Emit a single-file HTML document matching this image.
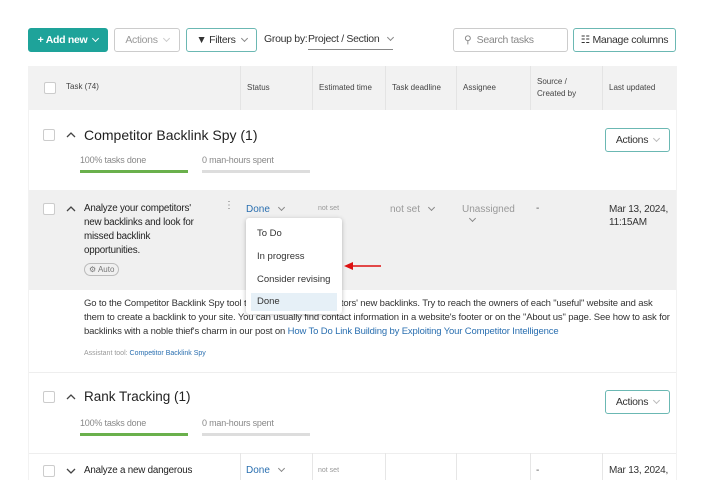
<!DOCTYPE html>
<html><head><style>
*{box-sizing:border-box;margin:0;padding:0}
body{width:704px;height:480px;background:#fff;font-family:"Liberation Sans",sans-serif;position:relative;overflow:hidden;color:#333}
.a{position:absolute;white-space:nowrap}
.btn{position:absolute;height:24px;border:1px solid #6bb8b3;border-radius:3px;font-size:10.5px;display:flex;align-items:center;justify-content:center;color:#333;letter-spacing:-.3px;white-space:nowrap}
.cb{position:absolute;width:12px;height:12px;border:1px solid #ccc;border-radius:2px;background:#fff}
.th{position:absolute;top:66px;height:44px;font-size:8px;color:#444;display:flex;align-items:center;padding-left:6px;border-left:1px solid #e4e4e4;line-height:12px}
.chev{display:inline-block;width:5px;height:5px;border-right:1px solid #888;border-bottom:1px solid #888;transform:rotate(45deg);margin-left:6px;position:relative;top:-2px}
.s{font-size:9px;color:#888;letter-spacing:-.2px}
.bar{position:absolute;height:3px}
.vl{position:absolute;width:1px;background:#e6e6e6}
svg.u{position:absolute}
</style></head><body>
<div class="btn" style="left:28px;top:28px;width:80px;background:#1ea39a;border-color:#1ea39a;color:#fff;font-weight:bold">+ Add new <span class="chev" style="border-color:#fff"></span></div>
<div class="btn" style="left:114px;top:28px;width:66px;border-color:#ccc;color:#999">Actions <span class="chev" style="border-color:#ccc"></span></div>
<div class="btn" style="left:186px;top:28px;width:71px">▼ Filters <span class="chev"></span></div>
<div class="a" style="left:264px;top:33px;font-size:10.5px;letter-spacing:-.3px">Group by:</div>
<div class="a" style="left:308px;top:33px;font-size:10.5px;letter-spacing:-.3px;border-bottom:1px solid #888;padding-bottom:4px;width:85px">Project / Section <span class="chev"></span></div>
<div class="btn" style="left:453px;top:28px;width:115px;border-color:#ccc;color:#888;justify-content:flex-start;padding-left:10px">⚲&nbsp; Search tasks</div>
<div class="btn" style="left:573px;top:28px;width:103px">☷ Manage columns</div>

<div class="a" style="left:28px;top:66px;width:648px;height:44px;background:#f2f2f2"></div>
<div class="cb" style="left:44px;top:82px"></div>
<div class="a" style="left:66px;top:82px;font-size:8px;color:#444">Task (74)</div>
<div class="th" style="left:240px;width:72px">Status</div>
<div class="th" style="left:312px;width:73px">Estimated time</div>
<div class="th" style="left:385px;width:71px">Task deadline</div>
<div class="th" style="left:456px;width:74px">Assignee</div>
<div class="th" style="left:530px;width:72px">Source /<br>Created by</div>
<div class="th" style="left:602px;width:74px">Last updated</div>

<div class="cb" style="left:43px;top:129px"></div>
<svg class="u" style="left:66px;top:131px" width="10" height="8"><path d="M1 6 L5 2 L9 6" fill="none" stroke="#444" stroke-width="1.3"/></svg>
<div class="a" style="left:84px;top:127px;font-size:14px;color:#222">Competitor Backlink Spy (1)</div>
<div class="a s" style="left:80px;top:155px">100% tasks done</div>
<div class="bar" style="left:80px;top:170px;width:108px;background:#6ab04c"></div>
<div class="a s" style="left:202px;top:155px">0 man-hours spent</div>
<div class="bar" style="left:202px;top:170px;width:108px;background:#ddd"></div>
<div class="btn" style="left:605px;top:128px;width:65px">Actions <span class="chev" style="border-color:#bbb"></span></div>

<div class="a" style="left:28px;top:190px;width:648px;height:100px;background:#f0f0f0"></div>
<div class="cb" style="left:43px;top:203px"></div>
<svg class="u" style="left:66px;top:205px" width="10" height="8"><path d="M1 6 L5 2 L9 6" fill="none" stroke="#444" stroke-width="1.3"/></svg>
<div class="a" style="left:84px;top:202px;font-size:9.8px;line-height:14px;color:#222;width:122px;white-space:normal;letter-spacing:-.2px">Analyze your competitors' new backlinks and look for missed backlink opportunities.</div>
<div class="a" style="left:84px;top:263px;font-size:8px;color:#777;border:1px solid #bbb;border-radius:8px;padding:1px 4px">⚙ Auto</div>
<div class="a" style="left:224px;top:200px;font-size:10px;color:#777">⋮</div>
<div class="a" style="left:246px;top:204px;font-size:10px;color:#2a6fb0">Done <span class="chev"></span></div>
<div class="a" style="left:318px;top:205px;font-size:7px;color:#999">not set</div>
<div class="a" style="left:390px;top:204px;font-size:10px;color:#999">not set <span class="chev"></span></div>
<div class="a" style="left:462px;top:204px;font-size:10px;color:#999">Unassigned<br><span class="chev" style="margin-left:8px"></span></div>
<div class="a" style="left:536px;top:203px;font-size:10px;color:#555">-</div>
<div class="a" style="left:609px;top:203px;font-size:10px;line-height:13px;color:#333;letter-spacing:-.2px">Mar 13, 2024,<br>11:15AM</div>

<div class="a" style="left:84px;top:297px;font-size:9.5px;line-height:14px;color:#333;width:590px;white-space:normal;letter-spacing:-.15px">Go to the Competitor Backlink Spy tool to analyze your competitors' new backlinks. Try to reach the owners of each "useful" website and ask them to create a backlink to your site. You can usually find contact information in a website's footer or on the "About us" page. See how to ask for backlinks with a noble thief's charm in our post on <span style="color:#2a6fb0">How To Do Link Building by Exploiting Your Competitor Intelligence</span></div>
<div class="a" style="left:84px;top:350px;font-size:7px;color:#999">Assistant tool: <span style="color:#2a6fb0">Competitor Backlink Spy</span></div>

<div class="a" style="left:246px;top:218px;width:96px;height:96px;background:#fff;border-radius:3px;box-shadow:0 1px 5px rgba(0,0,0,.25)"></div>
<div class="a" style="left:257px;top:228px;font-size:9.5px">To Do</div>
<div class="a" style="left:257px;top:251px;font-size:9.5px">In progress</div>
<div class="a" style="left:257px;top:274px;font-size:9.5px">Consider revising</div>
<div class="a" style="left:251px;top:293px;width:86px;height:18px;background:#e6f0f7"></div>
<div class="a" style="left:257px;top:296px;font-size:9.5px">Done</div>
<svg class="a" style="left:344px;top:261px" width="38" height="10"><line x1="6" y1="5" x2="37" y2="5" stroke="#d11" stroke-width="1.5"/><polygon points="0,5 9,1 9,9" fill="#d11"/></svg>

<div class="a" style="left:28px;top:372px;width:648px;height:1px;background:#eee"></div>
<div class="cb" style="left:43px;top:391px"></div>
<svg class="u" style="left:66px;top:393px" width="10" height="8"><path d="M1 6 L5 2 L9 6" fill="none" stroke="#444" stroke-width="1.3"/></svg>
<div class="a" style="left:84px;top:389px;font-size:13.5px;color:#222">Rank Tracking (1)</div>
<div class="a s" style="left:80px;top:418px">100% tasks done</div>
<div class="bar" style="left:80px;top:433px;width:108px;background:#6ab04c"></div>
<div class="a s" style="left:202px;top:418px">0 man-hours spent</div>
<div class="bar" style="left:202px;top:433px;width:108px;background:#ddd"></div>
<div class="btn" style="left:605px;top:390px;width:65px">Actions <span class="chev" style="border-color:#bbb"></span></div>

<div class="a" style="left:28px;top:453px;width:648px;height:1px;background:#eee"></div>
<div class="vl" style="left:240px;top:453px;height:27px"></div>
<div class="vl" style="left:312px;top:453px;height:27px"></div>
<div class="vl" style="left:385px;top:453px;height:27px"></div>
<div class="vl" style="left:456px;top:453px;height:27px"></div>
<div class="vl" style="left:530px;top:453px;height:27px"></div>
<div class="vl" style="left:602px;top:453px;height:27px"></div>
<div class="cb" style="left:43px;top:465px"></div>
<svg class="u" style="left:66px;top:467px" width="10" height="8"><path d="M1 2 L5 6 L9 2" fill="none" stroke="#444" stroke-width="1.3"/></svg>
<div class="a" style="left:84px;top:465px;font-size:9.8px;color:#222;letter-spacing:-.2px">Analyze a new dangerous</div>
<div class="a" style="left:246px;top:465px;font-size:10px;color:#2a6fb0">Done <span class="chev"></span></div>
<div class="a" style="left:318px;top:467px;font-size:7px;color:#999">not set</div>
<div class="a" style="left:536px;top:465px;font-size:10px;color:#555">-</div>
<div class="a" style="left:609px;top:465px;font-size:10px;color:#333;letter-spacing:-.2px">Mar 13, 2024,</div>
<div class="a" style="left:676px;top:66px;width:1px;height:414px;background:#f2f2f2"></div>
<div class="a" style="left:28px;top:110px;width:1px;height:370px;background:#f2f2f2"></div>
</body></html>
